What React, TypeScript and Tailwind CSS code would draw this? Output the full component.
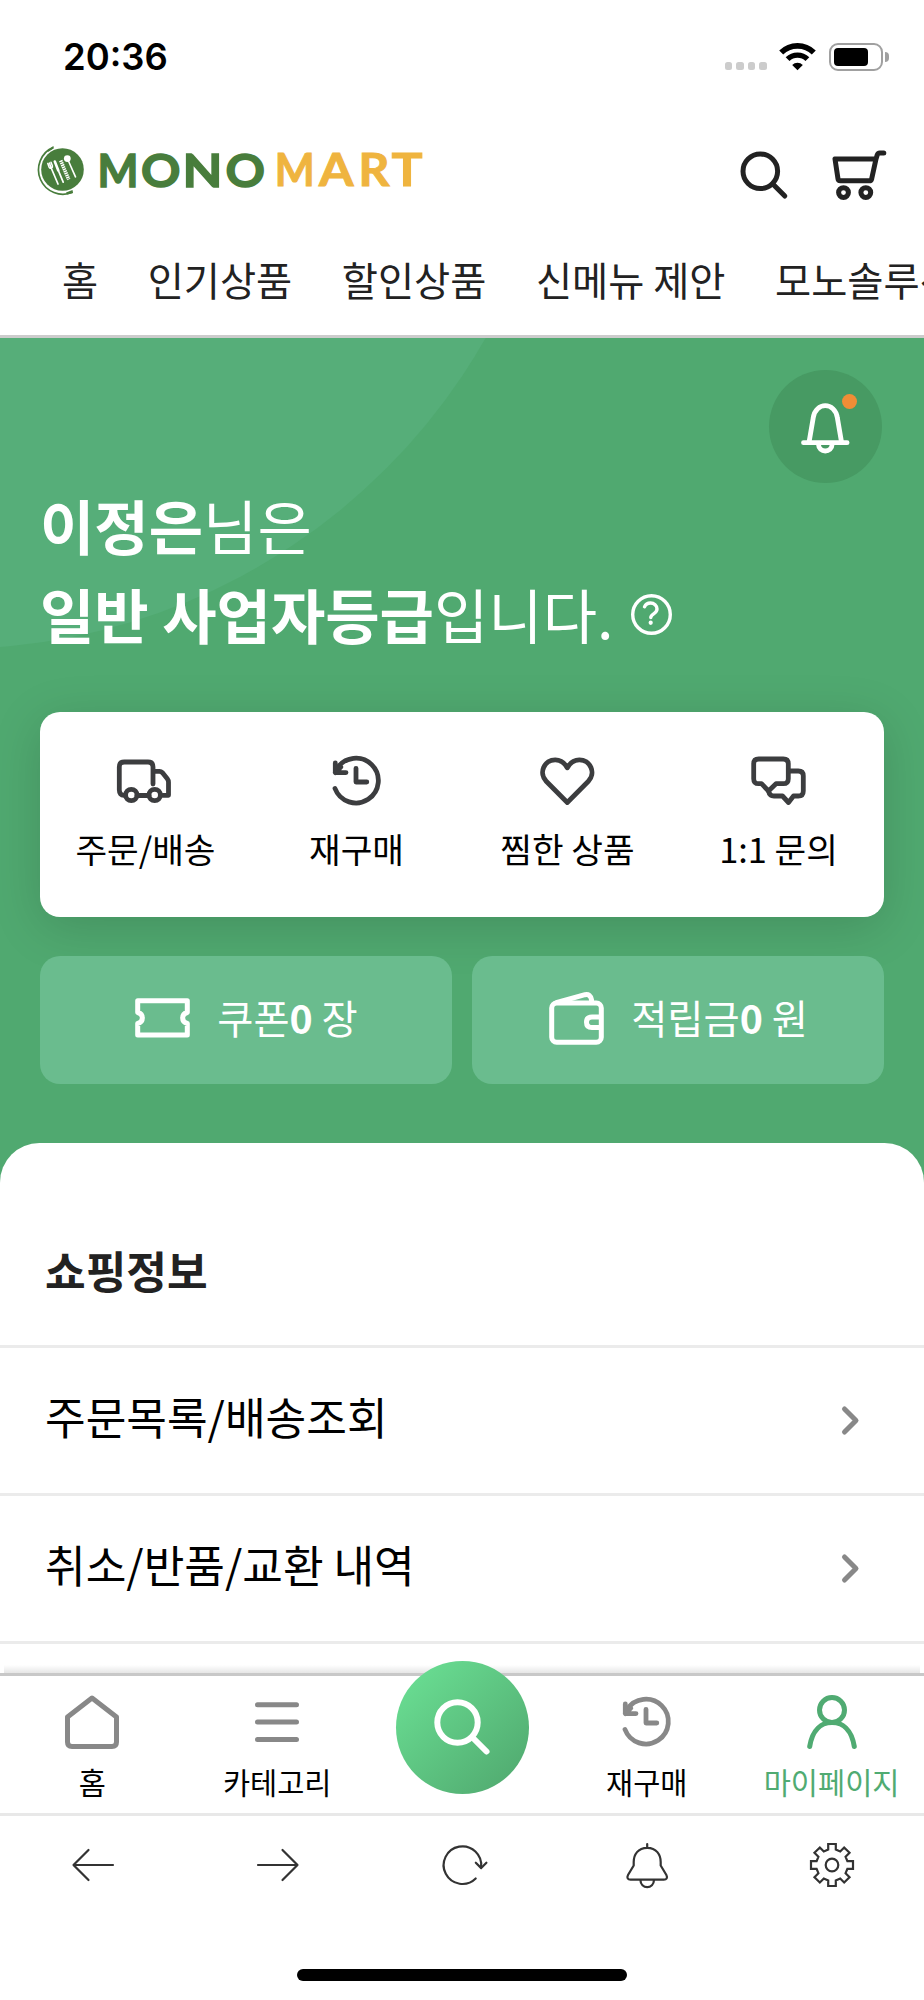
import type { ReactNode } from "react";

type IconProps = {
  w: number;
  h: number;
  sw?: number;
  className?: string;
  children: ReactNode;
};

function Icon({ w, h, sw = 4.8, className = "", children }: IconProps) {
  return (
    <svg
      width={w}
      height={h}
      viewBox={`0 0 ${w} ${h}`}
      fill="none"
      stroke="currentColor"
      strokeWidth={sw}
      strokeLinecap="round"
      strokeLinejoin="round"
      className={`shrink-0 overflow-visible ${className}`}
    >
      {children}
    </svg>
  );
}

function HistoryIcon() {
  return (
    <Icon w={48} h={50} className="-ml-px">
      <path d="M3 32.5A22.4 22.4 0 1 0 5 12.6" />
      <path d="M3.3 7v9.600H14M3.300 16.600l5.500-5.500M4 11.500l3 2" />
      <path d="M24 12.300V26h10.800" />
    </Icon>
  );
}

const gearPath = (() => {
  const pts: string[] = [];
  for (let k = 0; k < 8; k++) {
    const a = (k * Math.PI) / 4;
    for (const [r, t] of [
      [15.4, -3.8],
      [21, -3.8],
      [21, 3.8],
      [15.4, 3.8],
    ]) {
      const x = 22 + r * Math.cos(a) - t * Math.sin(a);
      const y = 22 + r * Math.sin(a) + t * Math.cos(a);
      pts.push(`${x.toFixed(2)} ${y.toFixed(2)}`);
    }
  }
  return `M${pts.join("L")}Z`;
})();

function StatusBar() {
  return (
    <div className="flex h-[114px] items-center justify-between pl-[63px] pr-[35px]">
      <span className="font-['Inter'] text-[36.4px] font-semibold leading-none text-black">
        20:36
      </span>
      <div className="flex items-center">
        <div className="mt-[18px] flex gap-1">
          <i className="size-[7.5px] rounded-[2.5px] bg-[#ccc]" />
          <i className="size-[7.5px] rounded-[2.5px] bg-[#ccc]" />
          <i className="size-[7.5px] rounded-[2.5px] bg-[#ccc]" />
          <i className="size-[7.5px] rounded-[2.5px] bg-[#ccc]" />
        </div>
        <svg width="37" height="28" viewBox="0 0 37 28" className="ml-[12px] text-black">
          <path
            d="M2.2 9.600a23 23 0 0 1 32.600 0"
            fill="none"
            stroke="currentColor"
            strokeWidth="5.600"
          />
          <path
            d="M8.600 16.200a14 14 0 0 1 19.800 0"
            fill="none"
            stroke="currentColor"
            strokeWidth="5.400"
          />
          <path d="M18.500 27.300l-5.300-5.300a7.600 7.600 0 0 1 10.600 0Z" fill="currentColor" />
        </svg>
        <div className="ml-[13px] h-7 w-[54px] rounded-[9px] border-2 border-[#a0a0a0] p-[3px]">
          <div className="h-full w-[34.5px] rounded-[4px] bg-black" />
        </div>
        <div className="ml-[2.5px] h-[10px] w-[4px] rounded-r-full bg-[#a0a0a0]" />
      </div>
    </div>
  );
}

const wordmark = [
  { ch: "M", x: 60.6, len: 41, mono: true },
  { ch: "O", x: 104, len: 39.5, mono: true },
  { ch: "N", x: 145.5, len: 40, mono: true },
  { ch: "O", x: 188.5, len: 39.5, mono: true },
  { ch: "M", x: 237.7, len: 40, mono: false },
  { ch: "A", x: 282, len: 34.5, mono: false },
  { ch: "R", x: 321.5, len: 31, mono: false },
  { ch: "T", x: 354.5, len: 31, mono: false },
];

function Logo() {
  return (
    <svg width="388" height="50" viewBox="0 0 388 50" className="overflow-visible">
      <circle cx="25.500" cy="23.500" r="21.300" fill="#487d3c" />
      <path
        d="M16.200 1.400A24.300 24.300 0 1 0 35.600 46.200"
        fill="none"
        stroke="#487d3c"
        strokeWidth="1.700"
      />
      <path d="M10 5l6.600-5v2.600L11 6ZM29 46.500l6.500-2.600.5 3-6 1.600Z" fill="#487d3c" />
      <g stroke="#fff" strokeLinecap="round" fill="none">
        <path d="M14.200 22l6.800 16" strokeWidth="1.700" />
        <path
          d="M10.800 17.500l1.300 3.600c1 2 4 .8 3.300-1.300L14 16.300M12.400 16.900l1.800 5"
          strokeWidth="1.500"
        />
        <path d="M17.800 15.500l3.400 8.700" strokeWidth="2.600" />
        <path d="M21.200 24.200l5 12" strokeWidth="1.700" />
        <path d="M23.700 14.500l8 19" strokeWidth="3.600" strokeDasharray="1.500 .7" strokeLinecap="butt" />
        <path d="M31 14l7.500 16.800" strokeWidth="1.600" />
      </g>
      <circle cx="30.300" cy="12.600" r="3.400" fill="#fff" />
      <g fontFamily="Lato, sans-serif" fontWeight="700" fontSize="46">
        {wordmark.map((l) => (
          <text
            key={l.x}
            x={l.x}
            y={l.mono ? 40.6 : 40.2}
            textLength={l.len}
            lengthAdjust="spacingAndGlyphs"
            fill={l.mono ? "#487d3c" : "#efb43f"}
            stroke={l.mono ? "#487d3c" : "#efb43f"}
            strokeWidth={l.mono ? 1.4 : 1}
          >
            {l.ch}
          </text>
        ))}
      </g>
    </svg>
  );
}

function Header() {
  return (
    <div className="flex h-[115px] items-start justify-between pl-[37px] pr-[38px] pt-[32px]">
      <Logo />
      <div className="flex items-start gap-[45px] pt-[4px] text-[#222]">
        <Icon w={47} h={49} sw={5} className="mt-[1px]">
          <circle cx="20.300" cy="20.300" r="17.300" />
          <path d="M32.800 33l12 12" />
        </Icon>
        <Icon w={54} h={50} sw={5}>
          <path d="M3 9h41l-4.300 19.800q-.5 2-2.500 2H8.300q-2 0-2.300-2ZM44 9l1.200-4q.6-2 2.600-2h4" />
          <circle cx="11.500" cy="42.600" r="4.900" />
          <circle cx="33.800" cy="42.600" r="4.900" />
        </Icon>
      </div>
    </div>
  );
}

const tabs = ["홈", "인기상품", "할인상품", "신메뉴 제안", "모노솔루션"];

function Tabs() {
  return (
    <div className="flex h-[109px] gap-[49.5px] overflow-hidden whitespace-nowrap border-b-[3px] border-[#ccc] pl-[62px] pt-[20px] text-[39.3px] leading-[59px] text-[#222]">
      {tabs.map((t) => (
        <span key={t} className="shrink-0">
          {t}
        </span>
      ))}
    </div>
  );
}

function Shortcut({ icon, label }: { icon: ReactNode; label: string }) {
  return (
    <div className="flex flex-1 flex-col items-center pt-[43px]">
      <div className="flex h-[52px] items-center justify-center text-[#3c3d3f]">{icon}</div>
      <span className="mt-[15px] text-[34.4px] leading-[52px] text-black">{label}</span>
    </div>
  );
}

function Benefit({ icon, name, unit }: { icon: ReactNode; name: string; unit: string }) {
  return (
    <div className="flex h-32 flex-1 items-center justify-center gap-[27px] rounded-[20px] bg-[#6abc8e] pl-px text-white">
      {icon}
      <span className="-mt-[8px] text-[39.3px] leading-[59px]">
        {name}
        <b>0</b> {unit}
      </span>
    </div>
  );
}

function Hero() {
  return (
    <div className="relative h-[862px] overflow-hidden bg-[#50a970] px-[40px]">
      <div className="absolute -left-[664.5px] -top-[919px] size-[1230px] rounded-full bg-[#56ae79]" />
      <div className="relative flex flex-col">
        <div className="mr-[2px] mt-[31.5px] flex size-[113.4px] items-center justify-center self-end rounded-full bg-[#479a63] text-white">
          <Icon w={50.6} h={50} sw={4.8}>
            <path d="M9 41.500l4.200-24.500C14.300 8.600 20 4.700 25.300 4.700s11 3.900 12.100 12.300l4.200 24.500" />
            <path d="M3.500 41.700h43.600M18.600 44a6.700 6 0 0 0 13.400 0" />
          </Icon>
          <i className="absolute right-[27px] top-[56px] size-[15px] rounded-full bg-[#f08d36]" />
        </div>
        <h1 className="-mt-[3px] text-[59.1px] font-normal leading-[88.7px] text-white">
          <b className="font-bold">이정은</b>님은
          <br />
          <span className="flex items-center">
            <span>
              <b className="font-bold">일반 사업자등급</b>입니다.
            </span>
            <Icon w={41} h={41} sw={3.4} className="ml-[17.5px] mt-[4px]">
              <circle cx="20.500" cy="20.500" r="18.800" />
              <path d="M13.500 12.800c1-2.400 3.400-3.800 6-3.800 3.600 0 6.500 2.600 6.500 6 0 5-6.200 4.600-6.200 8.600" />
              <path d="M19.700 28.700v.1" strokeWidth="4.200" />
            </Icon>
          </span>
        </h1>
        <div className="mt-[55px] flex h-[205px] rounded-[20px] bg-white shadow-[0_10px_50px_rgba(0,0,0,0.15)]">
          <Shortcut
            label="주문/배송"
            icon={
              <Icon w={54} h={44} className="-ml-[3px]">
                <path d="M7 36.300q-4.700 0-4.700-5.500V8q0-5 5-5H31q5 0 5 5v17" />
                <path d="M36.500 12.300h6q1.500 0 3 1.500l4.800 6q1.200 1.500 1.200 3.500v13h-5.800M20 36.500h12" />
                <circle cx="14.300" cy="36" r="5.700" />
                <circle cx="37.700" cy="36" r="5.700" />
              </Icon>
            }
          />
          <Shortcut label="재구매" icon={<HistoryIcon />} />
          <Shortcut
            label="찜한 상품"
            icon={
              <Icon w={54.6} h={50}>
                <path d="M27.300 11.800C24.500 6.500 20 3.800 15.300 3.800A12.600 12.600 0 0 0 6.200 25.200L27.300 46.500 48.400 25.200A12.600 12.600 0 0 0 39.300 3.800C34.600 3.800 30.100 6.500 27.300 11.800Z" />
              </Icon>
            }
          />
          <Shortcut
            label="1:1 문의"
            icon={
              <Icon w={55} h={50}>
                <path d="M7.700 3h24.600q5 0 5 5v14.700q0 5-5 5H25L17.500 35l-7-7.300H7.700q-5 0-5-5V8q0-5 5-5Z" />
                <path d="M37.500 15h9.800q5 0 5 5v15q0 5-5 5h-4.800l-5 6.500-6-6.500H23q-4.500 0-5.500-5" />
              </Icon>
            }
          />
        </div>
        <div className="mt-[39px] flex gap-[20px]">
          <Benefit
            name="쿠폰"
            unit="장"
            icon={
              <Icon w={55} h={40} sw={5} className="-mt-[4px]">
                <path d="M2.700 2.700h49.600v11.800c-6.200 1.500-6.200 9.500 0 11V37H2.700V25.500c6.200-1.500 6.200-9.500 0-11Z" />
              </Icon>
            }
          />
          <Benefit
            name="적립금"
            unit="원"
            icon={
              <Icon w={55} h={53} sw={5} className="-mt-[4px]">
                <rect x="2.700" y="11" width="49.600" height="39.300" rx="5" />
                <path d="M8 10.500L36 2.700q5.500-1 6.500 5v2" />
                <path d="M51.500 25H43q-5.500 0-5.500 5.300t5.500 5.300h8.500" />
              </Icon>
            }
          />
        </div>
      </div>
    </div>
  );
}

function Row({ label }: { label: string }) {
  return (
    <div className="flex h-[148px] items-start justify-between border-b-[3px] border-[#ebebeb] pl-[45px] pr-[65px] pt-[35px]">
      <span className="text-[44.2px] leading-[66px] text-black">{label}</span>
      <Icon w={19} h={29} sw={5} className="mt-[23px] text-[#888]">
        <path d="M4.500 3L16 14.500 4.500 26" />
      </Icon>
    </div>
  );
}

function NavItem({ icon, label, active }: { icon: ReactNode; label: string; active?: boolean }) {
  return (
    <div
      className={`flex flex-1 flex-col items-center ${active ? "text-[#50ab72]" : "text-[#888]"}`}
    >
      <div className="mt-[18px] flex h-[56px] items-center">{icon}</div>
      <span
        className={`mt-[9px] text-[29.5px] leading-[44px] ${active ? "text-[#50ab72]" : "text-black"}`}
      >
        {label}
      </span>
    </div>
  );
}

function BottomNav() {
  return (
    <div className="relative flex h-[143px] border-b-[3px] border-t-[3px] border-b-[#e8e8e8] border-t-[#c8c8c8] bg-white">
      <div className="absolute inset-x-1 -top-[11px] h-2 bg-linear-to-t from-black/10 to-transparent" />
      <NavItem
        label="홈"
        icon={
          <Icon w={54} h={54} sw={5}>
            <path d="M27 3L51.500 22v25q0 4.500-4.500 4.500H7Q2.500 51.500 2.500 47V22Z" />
          </Icon>
        }
      />
      <NavItem
        label="카테고리"
        icon={
          <Icon w={44} h={40} sw={5}>
            <path d="M2.500 2.700h39M2.500 20h39M2.500 37.400h39" />
          </Icon>
        }
      />
      <div className="relative flex flex-1 justify-center">
        <div className="-mt-[15.5px] ml-px flex size-[133px] items-center justify-center rounded-full bg-linear-135 from-[#6ce396] to-[#4fa66d] text-white">
          <Icon w={56} h={56} sw={6}>
            <circle cx="23.500" cy="23.500" r="20.200" />
            <path d="M38.500 38.500L52.500 52.500" />
          </Icon>
        </div>
      </div>
      <NavItem label="재구매" icon={<HistoryIcon />} />
      <NavItem
        label="마이페이지"
        active
        icon={
          <Icon w={50} h={54} sw={5}>
            <circle cx="25" cy="15" r="12.500" />
            <path d="M2.700 51.500C5.500 34 15 27.500 25 27.500S44.500 34 47.300 51.500" />
          </Icon>
        }
      />
    </div>
  );
}

function Toolbar() {
  return (
    <div className="flex h-[98px] items-center text-[#333]">
      <div className="flex flex-1 justify-center">
        <Icon w={42} h={32} sw={2.2} className="ml-px">
          <path d="M41 16H1.500M16.500 1L1.500 16l15 15" />
        </Icon>
      </div>
      <div className="flex flex-1 justify-center">
        <Icon w={42} h={32} sw={2.2} className="ml-px">
          <path d="M1 16h39.500M25.500 1l15 15-15 15" />
        </Icon>
      </div>
      <div className="flex flex-1 justify-center">
        <Icon w={38} h={38} sw={2.2}>
          <path d="M32.700 32.500A18.800 18.800 0 1 1 38.100 21.500" />
          <path d="M32.800 16.700l5.400 5.400 5.200-5.400" />
        </Icon>
      </div>
      <div className="flex flex-1 justify-center">
        <Icon w={42.4} h={45} sw={2.2}>
          <path d="M21.200 1v3M21.200 4.800C12 4.800 7.700 11.500 7.700 19v3.500L2 32c-1.500 3 0 4.700 2.500 4.700h33.400c2.500 0 4-1.700 2.500-4.700l-5.700-9.500V19c0-7.500-4.300-14.200-13.500-14.200ZM14.500 37.500a6.700 6.700 0 0 0 13.400 0" />
        </Icon>
      </div>
      <div className="flex flex-1 justify-center">
        <Icon w={44} h={44} sw={2.2}>
          <path d={gearPath} strokeLinejoin="miter" />
          <circle cx="22" cy="22" r="6.300" />
        </Icon>
      </div>
    </div>
  );
}

export default function App() {
  return (
    <div className="flex h-[2000px] w-[924px] flex-col overflow-hidden bg-white font-['Noto_Sans_CJK_KR',sans-serif]">
      <StatusBar />
      <Header />
      <Tabs />
      <Hero />
      <div className="relative -mt-[57px] h-[530px] shrink-0 overflow-hidden rounded-t-[39.4px] bg-white">
        <h2 className="h-[205px] border-b-[3px] border-[#ebebeb] pl-[45px] pt-[94px] text-[44.2px] font-bold leading-[66px] text-[#222]">
          쇼핑정보
        </h2>
        <Row label="주문목록/배송조회" />
        <Row label="취소/반품/교환 내역" />
      </div>
      <BottomNav />
      <Toolbar />
      <div className="mt-[55px] h-3 w-[330px] self-center rounded-full bg-black" />
    </div>
  );
}
